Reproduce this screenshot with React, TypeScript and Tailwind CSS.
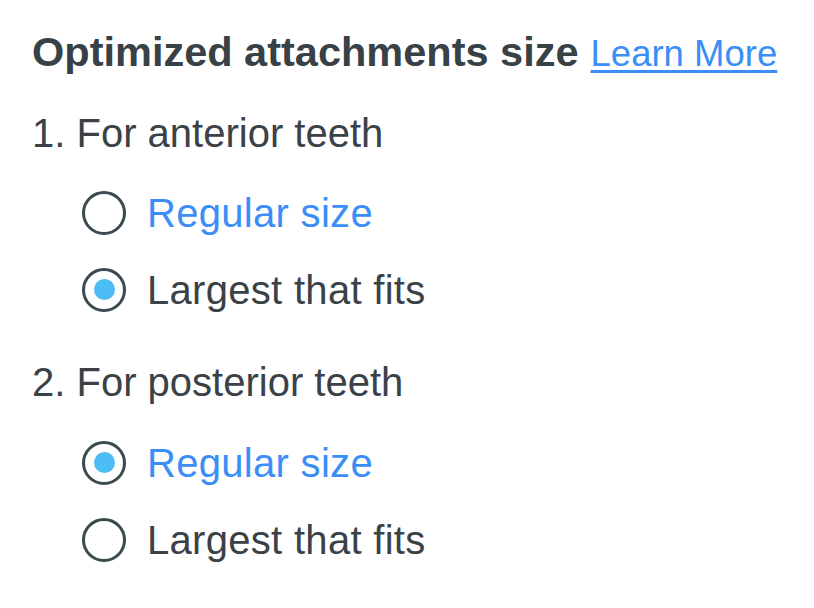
import { useState } from 'react';

type Choice = 'regular' | 'largest';

const options: { id: Choice; label: string }[] = [
  { id: 'regular', label: 'Regular size' },
  { id: 'largest', label: 'Largest that fits' },
];

function Radio({ checked, label, onSelect }: { checked: boolean; label: string; onSelect: () => void }) {
  const blue = label === 'Regular size';
  return (
    <label className="flex items-center h-[77px] pl-[50px] cursor-pointer" onClick={onSelect}>
      <span className="w-[44px] h-[44px] rounded-full border-[3px] border-[#3b4a4f] flex items-center justify-center shrink-0">
        {checked && <span className="w-[21px] h-[21px] rounded-full bg-[#4dbdf5]" />}
      </span>
      <span className={`ml-[21px] text-[40px] leading-[48px] tracking-[0.3px] ${blue ? 'text-[#3b8ef7]' : 'text-[#3a4147]'}`}>{label}</span>
    </label>
  );
}

export default function App() {
  const [anterior, setAnterior] = useState<Choice>('largest');
  const [posterior, setPosterior] = useState<Choice>('regular');

  return (
    <div className="min-h-screen bg-white pl-[32px] pt-[28px] font-['Liberation_Sans',Arial,sans-serif]">
      <div className="flex items-baseline gap-[12px] h-[48px]">
        <h2 className="text-[41.5px] leading-[48px] font-semibold text-[#374146]">Optimized attachments size</h2>
        <a href="#" className="text-[36.5px] leading-[48px] text-[#3b8ef7] underline underline-offset-[4px]">Learn More</a>
      </div>

      <p className="mt-[33px] text-[40px] leading-[48px] text-[#3a4147]">1. For anterior teeth</p>
      <div className="mt-[17px]">
        {options.map((o) => (
          <Radio key={o.id} label={o.label} checked={anterior === o.id} onSelect={() => setAnterior(o.id)} />
        ))}
      </div>

      <p className="mt-[30px] text-[40px] leading-[48px] text-[#3a4147]">2. For posterior teeth</p>
      <div className="mt-[18px]">
        {options.map((o) => (
          <Radio key={o.id} label={o.label} checked={posterior === o.id} onSelect={() => setPosterior(o.id)} />
        ))}
      </div>
    </div>
  );
}
